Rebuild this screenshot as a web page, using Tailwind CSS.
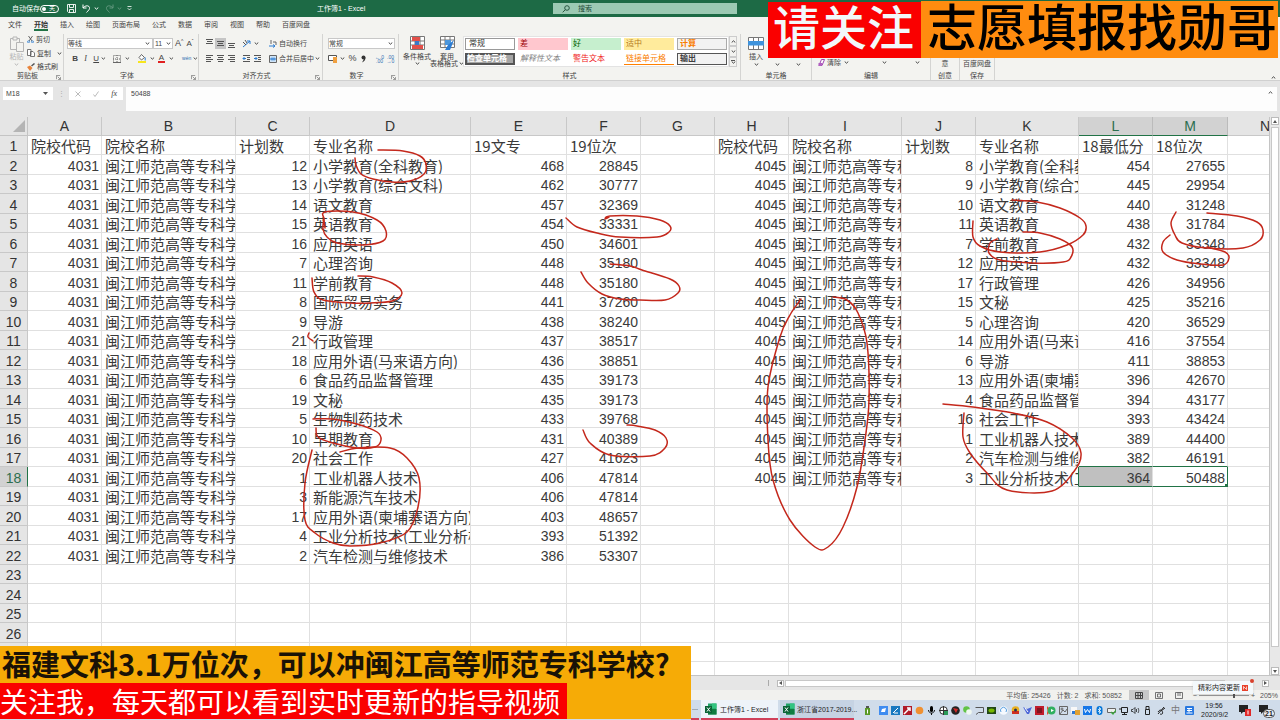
<!DOCTYPE html>
<html lang="zh-CN">
<head>
<meta charset="utf-8">
<title>工作簿1 - Excel</title>
<script src="https://cdn.jsdelivr.net/npm/@tailwindcss/browser@4"></script>
</head>
<body class="relative flex h-screen flex-col overflow-hidden bg-[#e5e5e5] font-['Liberation_Sans','Noto_Sans_CJK_SC',sans-serif] text-[7px] leading-[9px] text-[#444]">
<svg class="hidden" aria-hidden="true">
  <symbol id="chev" viewBox="0 0 5 3"><path d="M.7.5 2.5 2.2 4.3.5" fill="none" stroke="currentColor"/></symbol>
  <symbol id="launch" viewBox="0 0 6 6"><path d="M.5 5V.5H5M2 2l3 3M5.500 2.500v3h-3" fill="none" stroke="#666" stroke-width=".8"/></symbol>
  <symbol id="al" viewBox="0 0 9 9"><path d="M1 1.500h7M1 3.500h5M1 5.500h7M1 7.500h5" stroke="#555"/></symbol>
  <symbol id="ac" viewBox="0 0 9 9"><path d="M1 1.500h7M2 3.500h5M1 5.500h7M2 7.500h5" stroke="#555"/></symbol>
  <symbol id="ar" viewBox="0 0 9 9"><path d="M1 1.500h7M3 3.500h5M1 5.500h7M3 7.500h5" stroke="#555"/></symbol>
  <symbol id="xl" viewBox="0 0 12 12"><path d="M3 .5h8.500v11H3z" fill="#21a366"/><path d="M7 .5h4.500v5H7z" fill="#33c481"/><path d="M3 6h8.500v5.500H3z" fill="#107c41"/><path d="M0 3h7v7H0z" fill="#0b6336"/><path d="m2 4.500 3 4M5 4.500l-3 4" stroke="#fff"/></symbol>
</svg>

<!-- title bar -->
<header class="flex h-[17px] shrink-0 items-center bg-[#1d6a45] text-white">
  <span class="ml-3 w-7 whitespace-nowrap">自动保存</span>
  <button aria-label="自动保存" class="flex h-2 w-[19px] items-center rounded-full border border-white px-[1px] text-[6px]"><span class="size-1 rounded-full bg-white"></span><span class="ml-[3px]">关</span></button>
  <button aria-label="保存" class="ml-2"><svg class="size-[9px]" viewBox="0 0 9 9" fill="none" stroke="#fff" stroke-width=".9"><path d="M.5.5h8v8h-7l-1-1zM2.500.500v3h4v-3M2.500 8.500v-3h4v3"/></svg></button>
  <button aria-label="撤消" class="ml-[6px] flex items-center gap-[3px]"><svg class="size-[9px]" viewBox="0 0 9 9" fill="none" stroke="#fff"><path d="M1 .5v3.500h3.500M1 4C3 1 8 1 7.500 4.500 7.200 6.500 5 7.500 4.500 8.500"/></svg><svg class="h-[3px] w-[5px]"><use href="#chev"/></svg></button>
  <button aria-label="恢复" class="ml-[6px] flex items-center gap-[3px] opacity-30"><svg class="size-[9px]" viewBox="0 0 9 9" fill="none" stroke="#fff"><path d="M8 .5v3.500H4.500M8 4C6 1 1 1 1.500 4.500 1.800 6.500 4 7.500 4.500 8.500"/></svg><svg class="h-[3px] w-[5px]"><use href="#chev"/></svg></button>
  <button aria-label="自定义" class="ml-[5px]"><svg class="h-[5px] w-[5px]" viewBox="0 0 5 5" fill="none" stroke="#fff" stroke-width=".8"><path d="M.5.5h4M.7 2.200l1.800 1.800 1.800-1.800"/></svg></button>
  <h1 class="ml-[185px] w-12 whitespace-nowrap">工作簿1 - Excel</h1>
  <label class="ml-[188px] flex h-[11px] w-[184px] items-center bg-[#9cc9b3] pl-[9px] text-[#1d4a35]">
    <svg class="size-2" viewBox="0 0 8 8" fill="none" stroke="#1d4a35" stroke-width=".9"><circle cx="5" cy="3" r="2.300"/><path d="M3.300 4.700.7 7.300"/></svg>
    <input aria-label="搜索" placeholder="搜索" class="ml-2 w-20 placeholder:text-[#1d4a35]">
  </label>
</header>

<!-- ribbon tabs -->
<nav class="flex h-[15px] shrink-0 items-center gap-3 bg-[#f3f3f0] pl-2 whitespace-nowrap">
  <a href="#">文件</a><a href="#" class="border-b-2 border-[#217346] pt-[2px] font-bold text-[#333]">开始</a><a href="#">插入</a><a href="#">绘图</a><a href="#">页面布局</a><a href="#">公式</a><a href="#">数据</a><a href="#">审阅</a><a href="#">视图</a><a href="#">帮助</a><a href="#">百度网盘</a>
</nav>

<!-- ribbon -->
<section class="flex h-[49px] shrink-0 border-b border-[#d0d0d0] bg-[#f3f3f0] pt-[2px] whitespace-nowrap">
  <div class="relative flex w-16 flex-col border-r border-[#d4d4d2]">
    <div class="flex flex-1 pl-[9px]">
      <button class="flex w-[15px] flex-col items-center text-[#b5b5b5]"><svg class="mt-[2px] h-4 w-[14px]" viewBox="0 0 14 16" fill="#f3f3f0" stroke="#b5b5b5"><path d="M.5 2.500h9v11h-9z"/><path d="M3 1h4v3H3zM6.500 6.500h7v9h-7z"/></svg>粘贴<svg class="mt-[2px] h-[3px] w-[5px]"><use href="#chev"/></svg></button>
      <div class="ml-[3px] flex flex-col justify-between pt-[1px]">
        <button class="flex items-center gap-[2px]"><svg class="size-[7px]" viewBox="0 0 7 7" fill="none" stroke="#444" stroke-width=".8"><path d="M1.500 0 5 5M5.500 0 2 5"/><circle cx="1.500" cy="5.800" r="1" stroke="#2b7cd3"/><circle cx="5.500" cy="5.800" r="1" stroke="#2b7cd3"/></svg>剪切</button>
        <button class="flex items-center gap-[2px]"><svg class="size-2" viewBox="0 0 8 8" fill="#fff" stroke="#555" stroke-width=".8"><path d="M.5.5h3.500v6H.5zM3.500 2.500H6l1.500 1.500v3.500h-4z"/></svg>复制<svg class="ml-1 h-[3px] w-[5px]"><use href="#chev"/></svg></button>
        <button class="flex items-center gap-[2px]"><svg class="size-2" viewBox="0 0 8 8"><path d="m7.500.5-3 2.500" stroke="#555" stroke-width="1.500"/><path d="m0 4 3-1.500 2.500 2.500L3 8z" fill="#e8833a"/></svg>格式刷</button>
      </div>
    </div>
    <div class="h-[9px] pr-2 text-center">剪贴板</div><button aria-label="剪贴板设置" class="absolute right-[2px] bottom-0 size-[5px]"><svg class="size-full"><use href="#launch"/></svg></button>
  </div>

  <div class="relative flex w-[135px] flex-col border-r border-[#d4d4d2]">
    <div class="flex flex-1 flex-col pt-1 pl-[3px]">
      <div class="flex items-center">
        <select aria-label="字体" class="h-[11px] w-[86px] appearance-none border border-[#c8c8c8] bg-white"><option>等线</option></select>
        <svg class="-ml-2 mr-[3px] h-[3px] w-[5px]"><use href="#chev"/></svg>
        <select aria-label="字号" class="h-[11px] w-5 appearance-none border border-[#c8c8c8] bg-white pl-[1px]"><option>11</option></select>
        <svg class="-ml-[7px] mr-[2px] h-[3px] w-[5px]"><use href="#chev"/></svg>
        <button aria-label="增大字号" class="ml-[2px] flex text-[9px]">A<span class="text-[5px] leading-[5px]">^</span></button>
        <button aria-label="减小字号" class="ml-[3px] flex text-[8px]">A<span class="text-[5px] leading-[5px]">ˇ</span></button>
      </div>
      <div class="mt-[5px] flex items-center pl-[3px] text-[8px]">
        <button class="w-[11px] font-bold">B</button><button class="w-[11px] font-['Liberation_Serif',serif] italic">I</button><button class="w-[11px] underline">U</button><svg class="h-[3px] w-[5px]"><use href="#chev"/></svg>
        <button aria-label="边框" class="ml-[7px]"><svg class="size-2" viewBox="0 0 8 8" fill="none" stroke="#666"><path stroke-dasharray="1 1" d="M.5.5h7v7h-7zM4 0v8M0 4h8"/><path d="M0 7.500h8"/></svg></button><svg class="ml-1 h-[3px] w-[5px]"><use href="#chev"/></svg>
        <button aria-label="填充颜色" class="ml-2"><svg class="h-[9px] w-2" viewBox="0 0 8 9"><path d="m3.500.5 3 3-3 2.500-2.500-2.500z" fill="#fff" stroke="#444" stroke-width=".8"/><path d="M7.200 3.500v3" stroke="#2b7cd3"/><path d="M0 7h8v2H0z" fill="#f7e51d"/></svg></button><svg class="ml-1 h-[3px] w-[5px]"><use href="#chev"/></svg>
        <button class="ml-[3px] h-[9px] w-2 border-b-2 border-[#e02020] leading-[7px]">A</button><svg class="ml-1 h-[3px] w-[5px]"><use href="#chev"/></svg>
        <button aria-label="拼音" class="ml-2 text-[5px] leading-[5px] text-[#2b6cb0]">wén</button><svg class="ml-[2px] h-[3px] w-[5px]"><use href="#chev"/></svg>
      </div>
    </div>
    <div class="h-[9px] pr-2 text-center">字体</div><button aria-label="字体设置" class="absolute right-[2px] bottom-0 size-[5px]"><svg class="size-full"><use href="#launch"/></svg></button>
  </div>

  <div class="relative flex w-[124px] flex-col border-r border-[#d4d4d2]">
    <div class="flex flex-1 flex-col gap-[5px] pt-1 pl-[5px]">
      <div class="flex items-center">
        <button aria-label="顶端对齐" class="flex h-[11px] w-[11px] items-start justify-center"><svg class="size-[9px]" viewBox="0 0 9 9"><path d="M1 1.500h7M2 3.500h5M1 5.500h7" stroke="#555"/></svg></button>
        <button aria-label="垂直居中" class="flex h-[11px] w-[11px] items-center justify-center bg-[#c5c5c5]"><svg class="size-[9px]" viewBox="0 0 9 9"><path d="M1 2.500h7M2 4.500h5M1 6.500h7" stroke="#555"/></svg></button>
        <button aria-label="底端对齐" class="flex h-[11px] w-[11px] items-end justify-center"><svg class="size-[9px]" viewBox="0 0 9 9"><path d="M1 3.500h7M2 5.500h5M1 7.500h7" stroke="#555"/></svg></button>
        <button aria-label="方向" class="ml-[5px] flex w-4 items-center gap-[3px]"><svg class="size-[9px] shrink-0" viewBox="0 0 9 9" fill="none"><path d="M1 8 8 2M8 5V2H5" stroke="#2b7cd3"/><path d="m1 3 3 3M3 1l2 3" stroke="#555"/></svg><svg class="h-[3px] w-[5px] shrink-0"><use href="#chev"/></svg></button>
        <button class="ml-[11px] flex items-center gap-[2px]"><svg class="size-2" viewBox="0 0 8 8" fill="none"><path d="M2 0v4M4 2h3v3" stroke="#666"/><path d="M0 6h6l-2-1.500M6 6 4 7.500" stroke="#2b7cd3"/></svg>自动换行</button>
      </div>
      <div class="flex items-center">
        <button aria-label="左对齐" class="w-[11px] pl-[1px]"><svg class="size-[9px]"><use href="#al"/></svg></button>
        <button aria-label="居中" class="w-[11px] pl-[1px]"><svg class="size-[9px]"><use href="#ac"/></svg></button>
        <button aria-label="右对齐" class="w-[11px] pl-[1px]"><svg class="size-[9px]"><use href="#ar"/></svg></button>
        <button aria-label="减少缩进" class="ml-[5px] w-[11px]"><svg class="size-[9px]" viewBox="0 0 9 9" fill="none"><path d="M1 1.500h7M5 3.500h3M5 5.500h3M1 7.500h7" stroke="#555"/><path d="M4 4.500H1l1.500-1.500M1 4.500 2.500 6" stroke="#2b7cd3"/></svg></button>
        <button aria-label="增加缩进" class="w-[11px]"><svg class="size-[9px]" viewBox="0 0 9 9" fill="none"><path d="M1 1.500h7M5 3.500h3M5 5.500h3M1 7.500h7" stroke="#555"/><path d="M1 4.500h3L2.500 3M4 4.500 2.500 6" stroke="#2b7cd3"/></svg></button>
        <button class="ml-[5px] flex items-center gap-[2px]"><svg class="size-2" viewBox="0 0 8 8" fill="none" stroke="#2b7cd3"><path d="M.5.5h7v7h-7z" fill="#cfe4f7" stroke="#666"/><path d="M1 4h6M3 2.500v3M5 2.500v3"/></svg>合并后居中</button><svg class="ml-[1px] h-[3px] w-[5px]"><use href="#chev"/></svg>
      </div>
    </div>
    <div class="h-[9px] pr-2 text-center">对齐方式</div><button aria-label="对齐设置" class="absolute right-[2px] bottom-0 size-[5px]"><svg class="size-full"><use href="#launch"/></svg></button>
  </div>

  <div class="relative flex w-[76px] flex-col border-r border-[#d4d4d2]">
    <div class="flex flex-1 flex-col gap-[5px] pt-1 pl-[5px]">
      <div class="flex items-center"><select aria-label="数字格式" class="h-[11px] w-[67px] appearance-none border border-[#c8c8c8] bg-white"><option>常规</option></select><svg class="-ml-[7px] h-[3px] w-[5px]"><use href="#chev"/></svg></div>
      <div class="flex items-center text-[9px]">
        <button aria-label="会计格式" class="mr-[3px]"><svg class="size-[9px]" viewBox="0 0 9 9"><path d="M.5 1.500h8v5h-8z" fill="#fff" stroke="#555"/><path d="M5 3h4v6H5z" fill="#f0a040"/></svg></button><svg class="h-[3px] w-[5px]"><use href="#chev"/></svg>
        <button class="ml-[3px] w-[9px]">%</button><button aria-label="千位分隔" class="ml-1 w-[7px]"><svg class="h-2 w-[5px]" viewBox="0 0 5 8"><circle cx="2.500" cy="2.500" r="2" fill="#333"/><path d="M4.500 2.500c0 2-1 4-3.500 5l2-3.500z" fill="#333"/></svg></button>
        <button aria-label="增加小数" class="ml-[6px] w-[11px] text-[5px] leading-[4px] text-[#2b6cb0]">←.0<br>.00</button><button aria-label="减少小数" class="w-[11px] text-[5px] leading-[4px] text-[#2b6cb0]">.00<br>→0</button>
      </div>
    </div>
    <div class="h-[9px] pr-2 text-center">数字</div><button aria-label="数字设置" class="absolute right-[2px] bottom-0 size-[5px]"><svg class="size-full"><use href="#launch"/></svg></button>
  </div>

  <div class="flex w-[342px] flex-col border-r border-[#d4d4d2]">
    <div class="flex flex-1 items-start pt-[2px] pl-1">
      <button class="flex w-7 flex-col items-center leading-[7px]"><svg class="mb-[3px] h-[14px] w-[15px]" viewBox="0 0 15 14"><path d="M.5.5h14v13H.5zM.5 5h14M.5 9h14M5 0v14M10 0v14" fill="#fff" stroke="#777"/><path d="M2 1h8v4H2zM7 9h6v4H2V9z" fill="#e2504a"/><path d="M5 5h4v4H5z" fill="#3a78c8"/></svg>条件格式<svg class="mt-[2px] h-[3px] w-[5px]"><use href="#chev"/></svg></button>
      <button class="ml-[2px] flex w-7 flex-col items-center leading-[7px]"><svg class="mb-[3px] h-[14px] w-[15px] shrink-0" viewBox="0 0 15 14"><path d="M.5.500h14v11H.5zM.5 4h14M.5 8h14M5 0v12M10 0v12" fill="#fff" stroke="#777"/><path d="M5 4h6v5H5z" fill="#4a96dc"/><path d="m14 4-6 5-3 5h5z" fill="#2b7cd3"/></svg>套用<span class="flex items-center gap-[1px]">表格格式<svg class="h-[3px] w-[5px]"><use href="#chev"/></svg></span></button>
      <div class="ml-[2px] grid h-[31px] w-[266px] grid-cols-5 grid-rows-2 gap-x-[3px] gap-y-[3px] border border-[#e3e3e3] bg-white p-[1px] text-left text-[8px] leading-[10px]">
        <button class="border border-[#999] pl-[3px] text-left text-[#333]">常规</button>
        <button class="bg-[#ffc7ce] pl-[2px] text-left text-[#9c0006]">差</button>
        <button class="bg-[#c6efce] pl-[2px] text-left text-[#006100]">好</button>
        <button class="bg-[#ffeb9c] pl-[2px] text-left text-[#b57a1c]">适中</button>
        <button class="border border-[#aaa] bg-[#f2f2f2] pl-[2px] text-left font-bold text-[#fa7d00]">计算</button>
        <button class="border-2 border-[#555] bg-[#a5a5a5] text-left leading-[8px] font-bold text-white">检查单元格</button>
        <button class="pl-[2px] text-left text-[#7f7f7f] italic">解释性文本</button>
        <button class="pl-[2px] text-left text-[#f02020]">警告文本</button>
        <button class="border-b border-[#ff8001] pl-[2px] text-left text-[#fa7d00]">链接单元格</button>
        <button class="border border-[#555] bg-[#f2f2f2] pl-[2px] text-left font-bold text-[#3f3f3f]">输出</button>
      </div>
      <div class="flex h-[31px] w-2 flex-col">
        <button aria-label="上一行" class="flex flex-1 items-center justify-center border border-[#ccc]"><svg class="h-[3px] w-[5px] rotate-180"><use href="#chev"/></svg></button>
        <button aria-label="下一行" class="flex flex-1 items-center justify-center border border-[#ccc]"><svg class="h-[3px] w-[5px]"><use href="#chev"/></svg></button>
        <button aria-label="更多样式" class="flex flex-1 flex-col items-center justify-center border border-[#ccc]"><span class="h-px w-1 bg-[#555]"></span><svg class="h-[3px] w-[5px]"><use href="#chev"/></svg></button>
      </div>
    </div>
    <div class="h-[9px] text-center">样式</div>
  </div>

  <div class="flex w-[71px] flex-col border-r border-[#d4d4d2]">
    <div class="flex flex-1 pt-[3px] pl-[7px]">
      <button class="flex w-4 flex-col items-center leading-[7px]"><svg class="mb-[3px] h-[13px] w-4" viewBox="0 0 16 13"><path d="M.5.500h15v12H.5zM5.500 0v13M10.500 0v13" fill="#fff" stroke="#777"/><path d="M0 4h16v4.500H0z" fill="#3f93dc"/></svg>插入<svg class="mt-[3px] h-[3px] w-[5px]"><use href="#chev"/></svg></button>
      <svg class="mt-[26px] ml-[11px] h-[3px] w-[5px]"><use href="#chev"/></svg><svg class="mt-[26px] ml-4 h-[3px] w-[5px]"><use href="#chev"/></svg>
    </div>
    <div class="h-[9px] text-center">单元格</div>
  </div>
  <div class="flex w-[119px] flex-col border-r border-[#d4d4d2]">
    <div class="flex flex-1 items-end pb-1 pl-[6px]">
      <button class="flex items-center gap-[2px]"><svg class="size-[7px]" viewBox="0 0 7 7"><path d="M3.500.5h3L4 6.500H1z" fill="#fff" stroke="#a040b0"/><path d="M.5 4h4L3.500 7h-3z" fill="#b060c0"/></svg>清除<svg class="ml-[1px] h-[3px] w-[5px]"><use href="#chev"/></svg></button>
      <svg class="mb-[3px] ml-[33px] h-[3px] w-[5px]"><use href="#chev"/></svg><svg class="mb-[3px] ml-7 h-[3px] w-[5px]"><use href="#chev"/></svg>
    </div>
    <div class="h-[9px] text-center">编辑</div>
  </div>
  <div class="flex w-[29px] flex-col border-r border-[#d4d4d2] text-center"><div class="flex flex-1 items-end justify-center pb-[3px]"><button>意</button></div><div class="h-[9px]">创意</div></div>
  <div class="flex w-[35px] flex-col border-r border-[#d4d4d2] text-center"><div class="flex flex-1 items-end justify-center pb-[3px]"><button>百度网盘</button></div><div class="h-[9px]">保存</div></div>
  <button aria-label="折叠功能区" class="mr-[4px] mb-[1px] ml-auto self-end"><svg class="h-[3px] w-[5px] rotate-180"><use href="#chev"/></svg></button>
</section>

<!-- formula bar -->
<section class="flex h-9 shrink-0 items-start pt-[6px] pr-[3px] pl-[3px]">
  <div class="flex h-[13px] w-[50px] items-center bg-white pr-1"><input aria-label="名称框" value="M18" class="w-10 pl-[3px]"><svg class="h-[3px] w-[5px]" viewBox="0 0 5 3"><path d="M0 0h5L2.500 3z" fill="#555"/></svg></div>
  <span class="w-4 text-center leading-[13px] text-[#aaa]">⋮</span>
  <div class="flex h-[13px] w-[54px] items-center justify-around bg-white text-[8px] text-[#aaa]"><button aria-label="取消"><svg class="size-[6px]" viewBox="0 0 6 6"><path d="m.5.5 5 5M5.500.500l-5 5" stroke="#aaa" stroke-width=".8"/></svg></button><button aria-label="输入"><svg class="size-[6px]" viewBox="0 0 6 6" fill="none"><path d="m.5 3.500 1.500 2 3.500-5" stroke="#aaa" stroke-width=".8"/></svg></button><button class="font-['Liberation_Serif',serif] text-[#444] italic">fx</button></div>
  <div class="ml-[3px] flex h-6 flex-1 justify-between bg-[#fdfdfd] pt-[2px] pr-1"><input aria-label="编辑栏" value="50488" class="h-[9px] flex-1 pl-[5px]"><svg class="mt-[2px] h-[3px] w-[5px] rotate-180"><use href="#chev"/></svg></div>
</section>

<!-- worksheet -->
<main class="flex min-h-0 flex-1">
  <div class="min-w-0 flex-1 overflow-hidden bg-white">
    <table class="w-[1303px] table-fixed border-separate border-spacing-0 font-['Noto_Sans_CJK_SC',sans-serif] text-[15px] leading-[20px] font-normal text-[#3a3a3a]">
      <colgroup><col class="w-[28px]"><col class="w-[74px]"><col class="w-[134px]"><col class="w-[74px]"><col class="w-[161px]"><col class="w-[96px]"><col class="w-[74px]"><col class="w-[74px]"><col class="w-[74px]"><col class="w-[113px]"><col class="w-[74px]"><col class="w-[103px]"><col class="w-[74px]"><col class="w-[75px]"><col class="w-[75px]"></colgroup>
      <thead><tr id="head"></tr></thead>
      <tbody id="grid"></tbody>
    </table>
  </div>
  <div class="flex w-[11px] flex-col items-center border-l border-[#c4c4c4] bg-[#e8e8e8]">
    <button aria-label="向上滚动" class="flex h-2 w-2 items-center justify-center border border-[#bbb] bg-white"><svg class="h-[3px] w-1" viewBox="0 0 4 3"><path d="M0 3h4L2 0z" fill="#555"/></svg></button>
    <div class="mt-[2px] h-[520px] w-2 border border-[#c8c8c8] bg-white"></div>
    <button aria-label="向下滚动" class="mt-auto flex h-2 w-2 items-center justify-center border border-[#bbb] bg-white"><svg class="h-[3px] w-1" viewBox="0 0 4 3"><path d="M0 0h4L2 3z" fill="#555"/></svg></button>
  </div>
</main>

<!-- horizontal scroll bar -->
<div class="flex h-[15px] shrink-0 items-center border-t border-[#c4c4c4] bg-[#e6e6e6] pl-[768px]">
  <span class="h-[6px] w-px bg-[#aaa]"></span>
  <button aria-label="向左滚动" class="ml-2 flex size-[7px] items-center justify-center border border-[#bbb] bg-white"><svg class="h-1 w-[3px]" viewBox="0 0 3 4"><path d="M3 0v4L0 2z" fill="#555"/></svg></button>
  <div class="ml-px h-[7px] w-[440px] border border-[#c8c8c8] bg-white"></div>
  <button aria-label="向右滚动" class="mr-[11px] ml-auto flex size-[7px] items-center justify-center border border-[#bbb] bg-white"><svg class="h-1 w-[3px]" viewBox="0 0 3 4"><path d="M0 0v4l3-2z" fill="#555"/></svg></button>
</div>

<!-- status bar -->
<footer class="flex h-[10px] shrink-0 items-center justify-end bg-[#f1f1ee] pr-[2px] whitespace-nowrap text-[#555]">
  <span class="mr-[6px]">平均值: 25426</span><span class="mr-[6px]">计数: 2</span><span class="mr-[7px]">求和: 50852</span>
  <button aria-label="普通" class="flex h-[10px] w-5 items-center justify-center bg-[#c8c8c8]"><svg class="h-[7px] w-2" viewBox="0 0 8 7" fill="none" stroke="#444"><path d="M.5.500h7v6h-7zM.5 3.500h7M3 0v7M5.500 0v7"/></svg></button>
  <button aria-label="页面布局" class="flex w-5 justify-center"><svg class="h-[7px] w-2" viewBox="0 0 8 7" fill="none" stroke="#555" stroke-width=".8"><path d="M.5.500h7v6h-7zM2.500 2h3v3h-3z"/></svg></button>
  <button aria-label="分页预览" class="flex w-5 justify-center"><svg class="h-[7px] w-2" viewBox="0 0 8 7" fill="none" stroke="#555" stroke-width=".8"><path d="M.5.500h7v6h-7zM3 0v4M5 0v4"/></svg></button>
  <span class="ml-1">−</span><span class="mx-[2px] flex h-px w-[50px] items-center bg-[#999]"><span class="ml-[34px] h-[6px] w-[2px] bg-[#555]"></span></span><span class="mr-[5px]">+</span>
  <span class="w-[18px]">205%</span>
</footer>

<!-- system taskbar -->
<section class="flex h-5 shrink-0 bg-[#d0dcea] pl-[691px] whitespace-nowrap text-[#222]">
  <span class="w-[8px] border-b-2 border-[#d0405a] pl-[1px] leading-[16px]">...</span>
  <button class="ml-[2px] flex w-[77px] items-center gap-[3px] border-b-2 border-[#d0405a] bg-[#eef3f9] pl-1"><svg class="size-3"><use href="#xl"/></svg>工作簿1 - Excel</button>
  <button class="ml-[2px] flex w-[74px] items-center gap-[2px] border-b-2 border-[#d0405a] bg-[#c6d3e3] pl-[3px]"><svg class="size-3 shrink-0"><use href="#xl"/></svg>浙江省2017-2019...</button>
  <div id="tray" class="ml-[9px] flex items-center gap-[3px]">
    <svg class="mr-1 size-[9px]" viewBox="0 0 9 9"><path d="M2 2h5v7H2z" fill="#5a9a28"/><path d="M3 0h3v2H3z" fill="#555"/><path d="M4.500 3.500v4" stroke="#fff"/></svg>
    <svg class="size-[9px]" viewBox="0 0 9 9"><path d="M0 0h9v9H0z" fill="#3f8cf0"/><path d="m2 6 1-3 4-1-1 4z" fill="#fff"/></svg>
    <svg class="size-[9px]" viewBox="0 0 9 9"><path d="M0 0h9v9H0z" fill="#1878c0"/><path d="m2 7 5-5M3 7h4" stroke="#fff"/></svg>
    <svg class="size-[9px]" viewBox="0 0 9 9"><path d="M0 0h9v9H0z" fill="#b01c28"/><path d="m1 8 5-5M4 2h3v3" fill="none" stroke="#fff" stroke-width="1.500"/></svg>
    <svg class="size-[9px]" viewBox="0 0 9 9"><circle cx="4.500" cy="4.500" r="3.800" fill="#f09030"/></svg>
    <svg class="size-[9px]" viewBox="0 0 9 9"><rect x="3" width="3" height="6" rx="1.500"/><path d="M1.500 4c0 4 6 4 6 0M4.500 7v2" fill="none" stroke="#111"/></svg>
    <svg class="size-[9px]" viewBox="0 0 9 9" fill="none" stroke="#333"><circle cx="4.500" cy="4.500" r="3.800" fill="#fff"/><path d="M4.500 0v9M0 4.500h9"/><path d="M5 5h4v4H5z" fill="#2a9a58" stroke="none"/></svg>
    <svg class="size-[9px]" viewBox="0 0 9 9"><circle cx="4.500" cy="4.500" r="4.300" fill="#222"/><path d="m2 2 5 1-2 4z" fill="#d02828"/></svg>
    <svg class="size-[9px]" viewBox="0 0 9 9"><circle cx="3.500" cy="3.500" r="3.300" fill="#62c445"/><circle cx="6" cy="6" r="2.800" fill="#f0f8f0"/></svg>
    <svg class="size-[9px]" viewBox="0 0 9 9" fill="none" stroke="#555"><path d="M.5 1.500h8v5h-5L1 8.500"/></svg>
    <svg class="size-[9px]" viewBox="0 0 9 9"><path d="M0 1h9v7H0z" fill="#234816"/><ellipse cx="4.500" cy="4.500" rx="3" ry="2" fill="#76b900"/></svg>
    <svg class="size-[9px]" viewBox="0 0 9 9"><circle cx="4.500" cy="4.500" r="4.300" fill="#f6faff"/><path d="M2 6a3 3 0 1 1 5 0" fill="none" stroke="#5aa0e0"/></svg>
    <svg class="size-[9px]" viewBox="0 0 9 9"><circle cx="4.500" cy="4" r="3.800" fill="#eab020"/><path d="M1 5h7v3H1z" fill="#d03020"/><circle cx="4.500" cy="4" r="1.500" fill="#235"/></svg>
    <svg class="size-[9px]" viewBox="0 0 9 9"><path d="m0 1 4 2 5-2-3 7H4z" fill="#4d68d8"/><path d="m2 2 3 4" stroke="#fff"/></svg>
    <svg class="size-[9px]" viewBox="0 0 9 9"><path d="M0 0h9v9H0z" fill="#c01c2c"/><path d="M2 2h5v5H2z" fill="#801420"/></svg>
    <svg class="size-[9px]" viewBox="0 0 9 9"><circle cx="4.500" cy="4.500" r="4" fill="#30b060"/><path d="M1 1a5 5 0 0 0 0 7" stroke="#e05030" fill="none" stroke-width="2"/><path d="m4 3 3 1.500L4 6z" fill="#fff"/></svg>
    <svg class="size-[9px]" viewBox="0 0 9 9" fill="none" stroke="#666"><path d="M.5.500h8v8h-8zM1 8l3-4 2 2 2-3"/><circle cx="3" cy="3" r="1"/></svg>
    <svg class="size-[9px]" viewBox="0 0 9 9"><path d="M0 1h6v6H0z" fill="#f8f8f8"/><path d="M4 4h5v5H4z" fill="#e0a030"/><path d="M1 5h3v3H1z" fill="#3078d0"/></svg>
    <svg class="size-[9px]" viewBox="0 0 9 9"><path d="M0 0h9v9H0z" fill="#1677e8"/><path d="m1.500 3 1 3.500 2-3 2 3 1-3.500" fill="none" stroke="#fff"/></svg>
    <svg class="size-[9px]" viewBox="0 0 9 9"><rect x="1.500" width="6" height="9" rx="3" fill="#0878d8"/><path d="m3 3 3 3-1.500 1.500v-6L6 3 3 6" fill="none" stroke="#fff" stroke-width=".7"/></svg>
    <svg class="size-[9px]" viewBox="0 0 9 9"><path d="M.5 2.500h8v4h-8z" fill="#eee" stroke="#666"/><path d="m4 6 2 2 3-4" fill="none" stroke="#38a838" stroke-width="1.200"/></svg>
    <svg class="size-[9px]" viewBox="0 0 9 9" fill="none" stroke="#222"><path d="M2.500 1.500h6v5h-6zM0 3h2M5.500 7v1.500M3 8.500h5"/></svg>
    <svg class="size-[9px]" viewBox="0 0 9 9" fill="none" stroke="#222" stroke-width=".8"><path d="M.5 3.500h1.500l2-2v6l-2-2H.5zM5.500 3v3M7 2c1 2 1 3 0 5"/></svg>
    <svg class="size-[9px]" viewBox="0 0 9 9" fill="none" stroke="#222"><path d="M2.500 3.500h4v5h-4zM3 3V.500h3V3"/></svg>
    <svg class="ml-[2px] size-[9px]" viewBox="0 0 9 9" fill="none" stroke="#222"><path d="m1 8 6-7M1 6c4-6 7 4 2 2M8 2 4 5"/></svg>
    <span class="ml-[2px] w-[9px] text-[9px] text-[#777]">中</span>
    <svg class="ml-[2px] size-[9px]" viewBox="0 0 9 9"><rect width="9" height="9" rx="1" fill="#2878e0"/><path d="M2 2.500h5M2 4.500h5M1.500 7h6M4 2.500v4" stroke="#fff"/></svg>
  </div>
  <div class="ml-auto flex w-[26px] flex-col pt-[1px] text-center text-[7px] leading-[9px]"><span>19:56</span><span>2020/9/2</span></div>
  <svg class="mt-[5px] ml-3 h-3 w-3 shrink-0" viewBox="0 0 12 12"><path d="M0 0h9v7H4L2 9V7H0z" fill="#222"/><path d="M6 4h6v7H6z" fill="#e02828"/><path d="M9 5.500v4" stroke="#fff"/></svg>
  <div class="relative mr-1 ml-2 w-[17px]"><svg class="mt-[5px] size-[9px]" viewBox="0 0 9 9"><path d="M0 0h9v7H4L2 9V7H0z" fill="#222"/></svg><span class="absolute top-[9px] left-1 rounded-full border border-[#555] bg-[#e8edf3] px-px text-[7px] leading-[7px] font-bold">21</span></div>
</section>

<!-- content update bubble -->
<button class="absolute right-[27px] bottom-[26px] flex h-[13px] w-[60px] items-center justify-center gap-[2px] bg-[#f4f9fc] whitespace-nowrap text-[#222] shadow">精彩内容更新<svg class="size-[6px]" viewBox="0 0 6 6"><path d="M0 0h6v6H0z" fill="#e8432c"/><path d="M1.500 4.500v-3l3 3v-3" fill="none" stroke="#fff" stroke-width=".7"/></svg><span class="absolute -top-[2px] -right-[1px] size-1 rounded-full bg-[#d8402c]"></span></button>

<!-- hand-drawn marks -->
<svg id="ink" class="pointer-events-none absolute top-0 left-0 h-[720px] w-[1280px]" viewBox="0 0 1280 720" fill="none" stroke="#c4281c" stroke-width="1.500" stroke-linecap="round" stroke-linejoin="round"></svg>

<!-- broadcast captions -->
<div class="absolute top-0 right-[2px] flex font-['Noto_Sans_CJK_SC',sans-serif] font-medium whitespace-nowrap">
  <p class="mt-[2px] h-14 w-[153px] bg-[#fa0000] pl-[5px] text-[47px] leading-[46px] text-[#f2f8fa]">请关注</p>
  <p class="mt-px h-[57px] w-[357px] bg-[#ff8c0f] pl-[6px] text-[50px] leading-[46px] text-black">志愿填报找勋哥</p>
</div>
<div class="absolute bottom-px left-0 h-[73px] w-[691px] bg-[#f6ab06] font-['Noto_Sans_CJK_SC',sans-serif] whitespace-nowrap">
  <p class="h-[37px] pl-[2px] text-[29px] leading-[35px] font-bold text-[#1a1206]">福建文科3.1万位次，可以冲闽江高等师范专科学校?</p>
  <p class="h-9 w-[567px] bg-[#fa0000] text-[28px] leading-9 text-white">关注我，每天都可以看到实时更新的指导视频</p>
</div>

<script>
const S = '闽江师范高等专科学校';
const left = [[12,'小学教育(全科教育)',468,28845],[13,'小学教育(综合文科)',462,30777],[14,'语文教育',457,32369],[15,'英语教育',454,33331],[16,'应用英语',450,34601],[7,'心理咨询',448,35180],[11,'学前教育',448,35180],[8,'国际贸易实务',441,37260],[9,'导游',438,38240],[21,'行政管理',437,38517],[18,'应用外语(马来语方向)',436,38851],[6,'食品药品监督管理',435,39173],[19,'文秘',435,39173],[5,'生物制药技术',433,39768],[10,'早期教育',431,40389],[20,'社会工作',427,41623],[1,'工业机器人技术',406,47814],[3,'新能源汽车技术',406,47814],[17,'应用外语(柬埔寨语方向)',403,48657],[4,'工业分析技术(工业分析检验)',393,51392],[2,'汽车检测与维修技术',386,53307]];
const right = [[8,'小学教育(全科教育)',454,27655],[9,'小学教育(综合文科)',445,29954],[10,'语文教育',440,31248],[11,'英语教育',438,31784],[7,'学前教育',432,33348],[12,'应用英语',432,33348],[17,'行政管理',426,34956],[15,'文秘',425,35216],[5,'心理咨询',420,36529],[14,'应用外语(马来语方向)',416,37554],[6,'导游',411,38853],[13,'应用外语(柬埔寨语方向)',396,42670],[4,'食品药品监督管理',394,43177],[16,'社会工作',393,43424],[1,'工业机器人技术',389,44400],[2,'汽车检测与维修技术',382,46191],[3,'工业分析技术(工业分析检验)',364,50488]];
const empty = n => Array(n).fill('');
const rows = [['院校代码','院校名称','计划数','专业名称','19文专','19位次','','院校代码','院校名称','计划数','专业名称','18最低分','18位次','']];
for (let i = 0; i < 27; i++) {
  const l = left[i], r = right[i];
  rows.push([...(l ? [4031, S, ...l] : empty(6)), '', ...(r ? [4045, S, ...r] : empty(6)), '']);
}
const thBase = "h-[19px] border-r border-b p-0 text-center font-['Liberation_Sans',sans-serif] text-[14px] leading-[18px] font-normal ";
document.getElementById('head').innerHTML =
  '<th class="h-[19px] border-r border-b border-[#c4c4c4] bg-[#e5e5e5] p-0"><svg class="ml-auto size-[15px]" viewBox="0 0 15 15"><path d="M13 1v12H1z" fill="#b4b4b4"/></svg></th>' +
  [...'ABCDEFGHIJKLMN'].map(c => `<th scope="col" class="${thBase}${'LM'.includes(c) ? 'border-r-[#bbb] border-b-[#217346] bg-[#d2d2d2] text-[#2c6e4f]' : 'border-[#c8c8c8] bg-[#e5e5e5] text-[#333]'}">${c}</th>`).join('');
document.getElementById('grid').innerHTML = rows.map((row, ri) => {
  const n = ri + 1, h = n % 2 ? 'h-[19px]' : 'h-[20px]';
  const head = `<th scope="row" class="${h} border-r border-b p-0 text-center font-['Liberation_Sans',sans-serif] text-[14px] font-normal ${n === 18 ? 'border-r-[#217346] border-b-[#c8c8c8] bg-[#d2d2d2] text-[#2c6e4f]' : 'border-[#c8c8c8] bg-[#e5e5e5] text-[#333]'}"><div class="h-[18px]">${n}</div></th>`;
  return '<tr>' + head + row.map((v, c) => {
    const sel = c === 11 || c === 12;
    const bb = sel && (n === 17 || n === 18) ? 'border-b-[#217346] ' : 'border-b-[#e0e0e0] ';
    const br = n === 18 && (c === 10 || c === 12) ? 'border-r-[#217346] ' : 'border-r-[#e0e0e0] ';
    const bg = n === 18 && c === 11 ? 'bg-[#c0c0c0] ' : '';
    const handle = n === 18 && c === 12 ? '<span class="absolute right-0 bottom-0 size-[2px] bg-[#217346]"></span>' : '';
    const kind = typeof v === 'number' ? "pr-[2px] text-right font-['Liberation_Sans',sans-serif] text-[14px] " : 'pl-[3px] text-left ';
    return `<td class="relative overflow-hidden border-r border-b p-0 whitespace-nowrap ${kind}${bb}${br}${bg}"><div class="h-[18px] overflow-hidden">${v}</div>${handle}</td>`;
  }).join('') + '</tr>';
}).join('');

const strokes = [
 [378,150,403,151,420,156,426,164,424,174,410,181,392,182,373,179,361,174,356,165,355,158],
 [325,228,324,219,325,212,353,212,377,220,386,231,383,241,363,245,337,243,327,237,323,229,324,218],
 [358,276,373,277,392,283,402,293,392,301,370,303,350,303,323,300,314,292,312,278],
 [566,218,577,227,597,233,620,237,657,237,669,232,670,226,660,220,637,216,610,216,605,219,609,217],
 [581,272,588,283,602,294,620,299,640,300,665,300,678,293,679,286,670,279,642,270,630,266,610,264],
 [973,221,973,237,980,246,1000,252,1040,252,1067,245,1083,235,1086,226,1080,218,1060,208,1037,202,1012,200],
 [1023,232,1040,233,1060,239,1072,247,1071,257,1063,262,1033,263,1000,260,989,253,990,243,997,239],
 [1176,212,1171,223,1175,235,1182,243,1207,248,1243,248,1260,240,1263,230,1257,222,1237,216,1207,213],
 [1170,235,1163,242,1163,252,1177,260,1200,264,1223,265,1229,258,1225,252,1207,247],
 [801,299,790,315,780,337,768,387,768,440,773,480,790,520,815,547,828,547,843,527,857,487,865,440,869,400,867,343,858,313,847,300,833,297],
 [943,404,973,407,1013,413,1047,422,1072,438,1081,453,1075,470,1052,491,1007,490,987,473,970,453,963,437,964,413],
 [313,419,333,419,357,424,377,432,381,440,375,447,357,448,333,443,318,437,316,428],
 [340,452,358,448,390,448,407,458,419,478,418,507,407,532,380,543,350,546,333,543,315,533,305,520,305,483,312,450],
 [583,430,590,443,610,455,650,456,665,448,666,438,655,430,637,426,627,425],
 [309,333,308,337,313,341]
];
document.getElementById('ink').innerHTML = strokes.map(a => {
  const p = []; for (let i = 0; i < a.length; i += 2) p.push([a[i], a[i + 1]]);
  let d = `M${p[0]}`;
  for (let i = 0; i < p.length - 1; i++) {
    const p0 = p[i - 1] || p[i], p1 = p[i], p2 = p[i + 1], p3 = p[i + 2] || p2;
    d += `C${p1[0] + (p2[0] - p0[0]) / 6} ${p1[1] + (p2[1] - p0[1]) / 6} ${p2[0] - (p3[0] - p1[0]) / 6} ${p2[1] - (p3[1] - p1[1]) / 6} ${p2[0]} ${p2[1]}`;
  }
  return `<path d="${d}"/>`;
}).join('');
</script>
</body>
</html>
